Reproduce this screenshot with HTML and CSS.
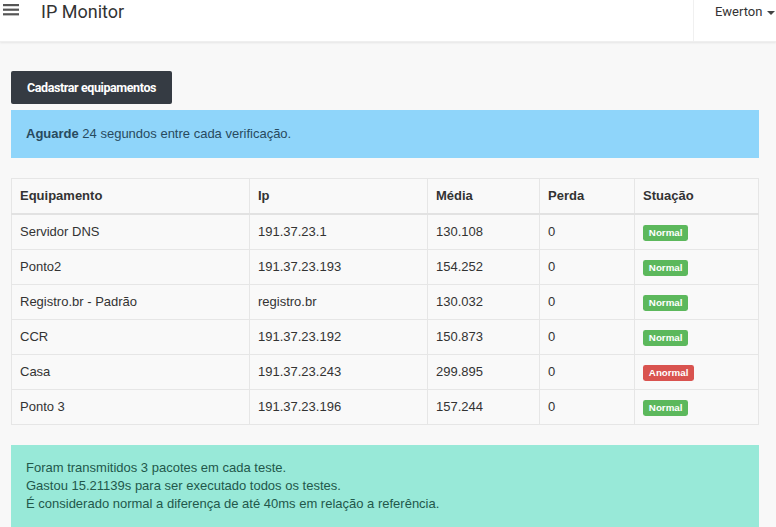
FILE: index.html
```html
<!DOCTYPE html>
<html lang="pt-BR">
<head>
<meta charset="utf-8">
<title>IP Monitor</title>
<link rel="stylesheet" href="styles.css">
</head>
<body>
<nav class="navbar">
  <a class="menu-toggle" href="#" aria-label="Menu">
    <svg width="16" height="12" viewBox="0 0 16 12"><rect x="0" y="0" width="16" height="2.2" fill="#555"/><rect x="0" y="4.6" width="16" height="2.2" fill="#555"/><rect x="0" y="9.2" width="16" height="2.2" fill="#555"/></svg>
  </a>
  <span class="brand">IP Monitor</span>
  <div class="user-menu">
    <span class="user-name">Ewerton</span>
    <span class="caret"></span>
  </div>
</nav>

<main class="container">
  <button class="btn-dark" type="button">Cadastrar equipamentos</button>

  <div class="alert alert-info"><strong>Aguarde</strong> 24 segundos entre cada verificação.</div>

  <table class="data-table">
    <colgroup>
      <col class="c1"><col class="c2"><col class="c3"><col class="c4"><col class="c5">
    </colgroup>
    <thead>
      <tr><th>Equipamento</th><th>Ip</th><th>Média</th><th>Perda</th><th>Stuação</th></tr>
    </thead>
    <tbody>
      <tr><td>Servidor DNS</td><td>191.37.23.1</td><td>130.108</td><td>0</td><td><span class="label label-ok">Normal</span></td></tr>
      <tr><td>Ponto2</td><td>191.37.23.193</td><td>154.252</td><td>0</td><td><span class="label label-ok">Normal</span></td></tr>
      <tr><td>Registro.br - Padrão</td><td>registro.br</td><td>130.032</td><td>0</td><td><span class="label label-ok">Normal</span></td></tr>
      <tr><td>CCR</td><td>191.37.23.192</td><td>150.873</td><td>0</td><td><span class="label label-ok">Normal</span></td></tr>
      <tr><td>Casa</td><td>191.37.23.243</td><td>299.895</td><td>0</td><td><span class="label label-bad">Anormal</span></td></tr>
      <tr><td>Ponto 3</td><td>191.37.23.196</td><td>157.244</td><td>0</td><td><span class="label label-ok">Normal</span></td></tr>
    </tbody>
  </table>

  <div class="alert alert-success">
    Foram transmitidos 3 pacotes em cada teste.<br>
    Gastou 15.21139s para ser executado todos os testes.<br>
    É considerado normal a diferença de até 40ms em relação a referência.
  </div>
</main>
</body>
</html>
```

FILE: styles.css
```css
* { box-sizing: border-box; }

html, body {
  margin: 0;
  padding: 0;
}

body {
  background: #f8f8f8;
  font-family: "Liberation Sans", Arial, sans-serif;
  font-size: 13px;
  color: #333;
  overflow: hidden;
}

.navbar {
  display: flex;
  align-items: flex-start;
  height: 42px;
  background: #fff;
  box-shadow: 0 1px 2px rgba(0, 0, 0, 0.08);
  border-bottom: 1px solid #efefef;
}

.menu-toggle {
  display: block;
  padding: 4px 0 0 3px;
  width: 41px;
  line-height: 0;
}

.brand {
  font-family: Roboto, sans-serif;
  font-size: 18px;
  line-height: 24px;
  color: #333;
}

.user-menu {
  margin-left: auto;
  width: 83px;
  height: 41px;
  border-left: 1px solid #f0f0f0;
  padding: 2px 0 0 21px;
  font-family: Roboto, sans-serif;
  font-size: 13px;
  line-height: 20px;
  color: #333;
  display: flex;
  align-items: flex-start;
}

.caret {
  display: inline-block;
  margin: 9px 0 0 5px;
  border-left: 4px solid transparent;
  border-right: 4px solid transparent;
  border-top: 4px solid #444;
}

.container {
  padding: 29px 17px 0 11px;
}

.btn-dark {
  display: block;
  width: 161px;
  height: 33px;
  padding: 0;
  text-align: center;
  background: #353b43;
  color: #fff;
  border: 0;
  border-radius: 2px;
  font-family: Roboto, sans-serif;
  font-weight: 700;
  font-size: 12.5px;
  letter-spacing: -0.4px;
}

.alert {
  padding: 15px 15px 15px;
  line-height: 18px;
}

.alert-info {
  margin-top: 6px;
  height: 48px;
  background: #8fd5fa;
  color: #284a5e;
}

.alert-success {
  padding-top: 14px;
  line-height: 18px;
  background: #98e9d8;
  color: #22584b;
  height: 100px;
}

.data-table {
  margin-top: 20px;
  margin-bottom: 20px;
  width: 748px;
  table-layout: fixed;
  border-collapse: collapse;
  background: #f9f9f9;
  border: 1px solid #e2e2e2;
}

.c1 { width: 238px; }
.c2 { width: 178px; }
.c3 { width: 112px; }
.c4 { width: 95px; }

.data-table th,
.data-table td {
  padding: 8px;
  line-height: 18px;
  text-align: left;
  border: 1px solid #e6e6e6;
  vertical-align: top;
}

.data-table th {
  font-weight: bold;
  border-bottom: 2px solid #e2e2e2;
}

.data-table tbody tr:first-child td {
  border-top: 0;
}

.label {
  display: inline;
  padding: 0.2em 0.6em 0.3em;
  font-size: 75%;
  font-weight: bold;
  line-height: 1;
  color: #fff;
  border-radius: 0.25em;
  vertical-align: baseline;
  white-space: nowrap;
}

.label-ok { background: #5cb85c; }
.label-bad { background: #d9534f; }
```
